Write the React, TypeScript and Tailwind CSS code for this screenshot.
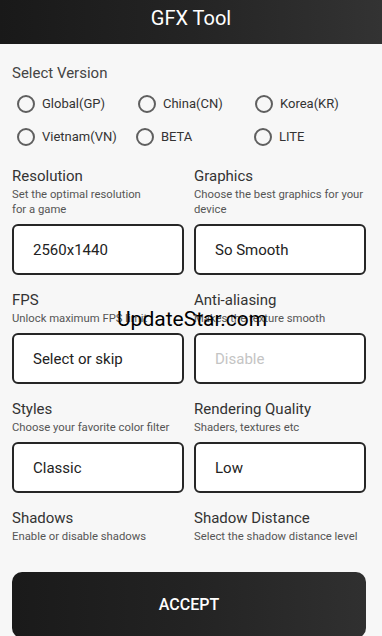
import React from "react";

type Setting = {
  title: string;
  desc: string[];
  value?: string;
  placeholder?: boolean;
};

const versions = [
  [
    { label: "Global(GP)", w: "w-[121px]" },
    { label: "China(CN)", w: "w-[117px]" },
    { label: "Korea(KR)", w: "w-auto" },
  ],
  [
    { label: "Vietnam(VN)", w: "w-[119px]" },
    { label: "BETA", w: "w-[118px]" },
    { label: "LITE", w: "w-auto" },
  ],
];

const settings: Setting[] = [
  { title: "Resolution", desc: ["Set the optimal resolution", "for a game"], value: "2560x1440" },
  { title: "Graphics", desc: ["Choose the best graphics for your", "device"], value: "So Smooth" },
  { title: "FPS", desc: ["Unlock maximum FPS limit"], value: "Select or skip" },
  { title: "Anti-aliasing", desc: ["Makes the texture smooth"], value: "Disable", placeholder: true },
  { title: "Styles", desc: ["Choose your favorite color filter"], value: "Classic" },
  { title: "Rendering Quality", desc: ["Shaders, textures etc"], value: "Low" },
  { title: "Shadows", desc: ["Enable or disable shadows"] },
  { title: "Shadow Distance", desc: ["Select the shadow distance level"] },
];

const Radio = ({ label, w }: { label: string; w: string }) => (
  <div className={`flex items-center gap-[7px] ${w}`}>
    <span className="w-[18px] h-[18px] rounded-full border-2 border-[#5f5f5f]" />
    <span className="text-[13px] text-[#333]">{label}</span>
  </div>
);

const SettingCell = ({ s }: { s: Setting }) => (
  <div className="flex flex-col">
    <p className="text-[15px] leading-[20px] text-[#333]">{s.title}</p>
    <div className="mt-[1px] text-[11.3px] leading-[15px] text-[#555] whitespace-nowrap">
      {s.desc.map((d, i) => (
        <p key={i}>{d}</p>
      ))}
    </div>
    {s.value && (
      <div className="mt-[7px] h-[51px] rounded-[6px] border-2 border-[#262626] bg-white flex items-center pl-[19px] pt-[2px]">
        <span className={`text-[15px] ${s.placeholder ? "text-[#c4c4c4]" : "text-[#222]"}`}>{s.value}</span>
      </div>
    )}
  </div>
);

export default function App() {
  return (
    <div className="relative h-[636px] overflow-hidden bg-[#f7f7f7] font-['Roboto',sans-serif]">
      <header className="h-[44px] bg-gradient-to-r from-[#191919] via-[#242424] to-[#333] text-center pt-[8px]">
        <h1 className="text-[20px] leading-[20px] text-white">GFX Tool</h1>
      </header>

      <div className="pl-[12px] pr-[16px] pt-[19px]">
        <p className="text-[15px] leading-[20px] text-[#444]">Select Version</p>
        <div className="mt-[4px] pl-[5px]">
          {versions.map((row, i) => (
            <div key={i} className="flex items-center h-[33px]">
              {row.map((v) => (
                <Radio key={v.label} label={v.label} w={v.w} />
              ))}
            </div>
          ))}
        </div>

        <div className="mt-[13px] grid grid-cols-2 gap-x-[10px] gap-y-[15px]">
          {settings.map((s) => (
            <SettingCell key={s.title} s={s} />
          ))}
        </div>

        <button className="mt-[28px] w-full h-[66px] rounded-[10px] bg-gradient-to-r from-[#1a1a1a] via-[#232323] to-[#303030] text-white text-[16px] font-medium">
          ACCEPT
        </button>
      </div>

      <span className="absolute left-[117px] top-[309px] text-[21px] leading-[21px] text-black">UpdateStar.com</span>
    </div>
  );
}
